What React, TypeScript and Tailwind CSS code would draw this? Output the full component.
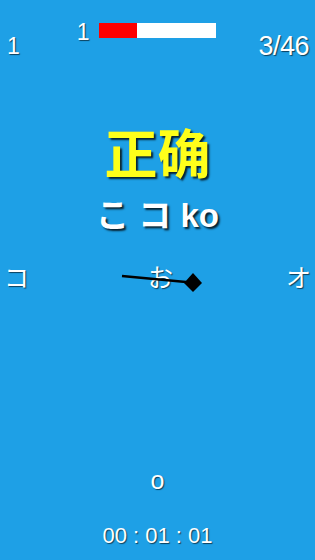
const font = { fontFamily: '"Liberation Sans", Arial, "Noto Sans CJK SC", sans-serif' };

export default function App() {
  return (
    <div
      className="relative w-[315px] h-[560px] bg-[#1ea0e6] text-white overflow-hidden flex flex-col [text-shadow:1px_1px_1px_rgba(0,0,0,0.6)]"
      style={font}
    >
      <div className="flex items-start h-[70px]">
        <div className="text-[23px] leading-none mt-[35px] ml-[7px]">1</div>
        <div className="flex items-start ml-[57px] mt-[21px]">
          <span className="text-[23px] leading-none">1</span>
          <div className="flex w-[117px] h-[15px] ml-[9px] mt-[2px] bg-white">
            <div className="w-[38px] h-full bg-[#ff0000]" />
          </div>
        </div>
        <div className="ml-auto mr-[6px] mt-[33px] text-[27px] leading-none tracking-[-0.5px]">3/46</div>
      </div>

      <div className="flex flex-col items-center mt-[59px]">
        <div className="text-[53px] font-bold leading-none text-[#ffff1a] [text-shadow:2px_2px_2px_rgba(0,0,0,0.8)]">
          正确
        </div>
        <div className="text-[33px] font-bold leading-none mt-[17px] [text-shadow:2px_2px_2px_rgba(0,0,0,0.8)]">
          こ コ ko
        </div>
      </div>

      <div className="relative flex items-center justify-between mt-[34px] px-[4px] h-[25px] text-[25px] leading-none">
        <span>コ</span>
        <span className="ml-[6px]">お</span>
        <span>オ</span>
        <svg className="absolute left-0 top-0 overflow-visible" width="315" height="30" viewBox="0 0 315 30">
          <line x1="122" y1="10" x2="186" y2="16" stroke="#000" strokeWidth="2.5" />
          <polygon points="193,7 202,17 193,26 184,17" fill="#000" />
        </svg>
      </div>

      <div className="flex justify-center mt-[177px] text-[25px] leading-none">o</div>

      <div className="flex justify-center mt-[32px] text-[22px] leading-none">00 : 01 : 01</div>
    </div>
  );
}
